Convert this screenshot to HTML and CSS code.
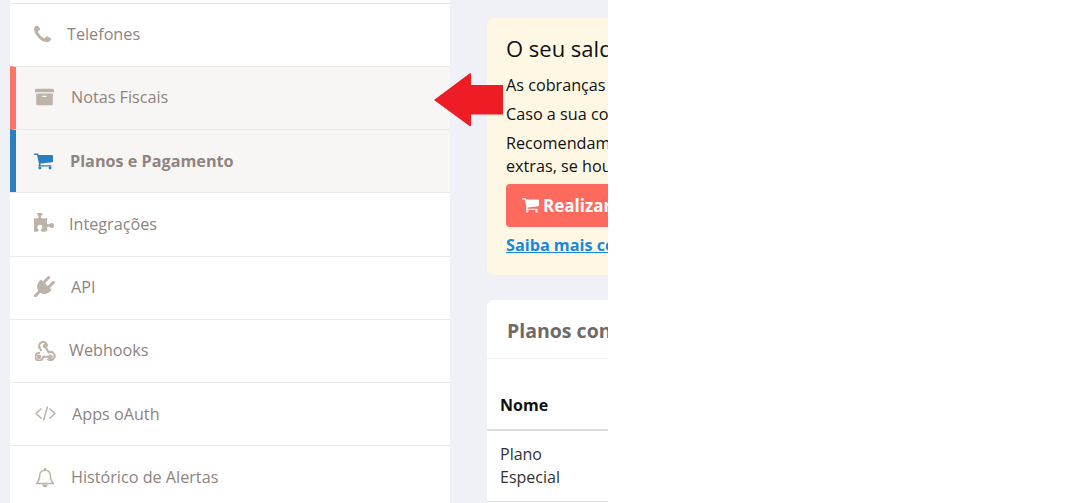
FILE: index.html
```html
<!DOCTYPE html>
<html lang="pt-BR">
<head>
<meta charset="utf-8">
<title>Planos e Pagamento</title>
<link rel="stylesheet" href="styles.css">
</head>
<body>
<div class="page">
  <nav class="sidebar">
    <a class="item">
      <svg class="icon i-phone" viewBox="192 192 1408 1408"><path d="M1600 1240q0 27-10 70.500t-21 68.500q-21 50-122 106-94 51-186 51-27 0-53-3.500t-57.500-12.500-47-14.500-55.500-20.500-49-18q-98-35-175-83-127-79-264-216t-216-264q-48-77-83-175-3-9-18-49t-20.500-55.500-14.500-47-12.500-57.500-3.500-53q0-92 51-186 56-101 106-122 25-11 68.500-21t70.500-10q14 0 21 3 18 6 53 76 11 19 30 54t35 63.500 31 53.500q3 4 17.500 25t21.500 35.500 7 28.500q0 20-28.500 50t-62 55-62 53-28.500 46q0 9 5 22.500t8.500 20.500 14 24 11.500 19q76 137 174 235t235 174q2 1 19 11.500t24 14 20.500 8.500 22.500 5q18 0 46-28.500t53-62 55-62 50-28.500q14 0 28.500 7t35.500 21.500 25 17.500q25 15 53.500 31t63.500 35 54 30q70 35 76 53 3 7 3 21z"/></svg>
      <span class="label up">Telefones</span>
    </a>
    <a class="item active-red">
      <svg class="icon i-archive" viewBox="0 32 512 448"><path d="M32 448c0 17.700 14.300 32 32 32h384c17.700 0 32-14.300 32-32V160H32v288zm160-212c0-6.600 5.400-12 12-12h104c6.600 0 12 5.400 12 12v8c0 6.600-5.400 12-12 12H204c-6.600 0-12-5.400-12-12v-8zM480 32H32C14.300 32 0 46.300 0 64v48c0 8.800 7.200 16 16 16h480c8.800 0 16-7.200 16-16V64c0-17.700-14.300-32-32-32z"/></svg>
      <span class="label up">Notas Fiscais</span>
    </a>
    <a class="item active-blue">
      <svg class="icon i-cart" viewBox="64 256 1664 1408"><path d="M704 1536q0 52-38 90t-90 38-90-38-38-90 38-90 90-38 90 38 38 90zm896 0q0 52-38 90t-90 38-90-38-38-90 38-90 90-38 90 38 38 90zm128-1088v512q0 24-16.500 42.500t-40.500 21.500l-1044 122q13 60 13 70 0 16-24 64h920q26 0 45 19t19 45-19 45-45 19h-1024q-26 0-45-19t-19-45q0-11 8-31.500t16-36 21.500-40 15.500-29.500l-177-823h-204q-26 0-45-19t-19-45 19-45 45-19h256q16 0 28.500 6.500t19.500 15.500 13 24.500 8 26 5.500 29.500 4.500 26h1201q26 0 45 19t19 45z"/></svg>
      <span class="label">Planos e Pagamento</span>
    </a>
    <a class="item">
      <svg class="icon i-puzzle" viewBox="128 128 1536 1536"><path d="M1664 1098q0 81-44.500 135t-123.500 54q-41 0-77.500-17.500t-59-38-56.500-38-71-17.500q-110 0-110 124 0 39 16 115t15 115v5q-22 0-33 1-34 3-97.500 11.500t-115.500 13.500-98 5q-61 0-103-26.500t-42-83.500q0-37 17.500-71t38-56.500 38-59 17.500-77.500q0-79-54-123.500t-135-44.500q-84 0-143 45.500t-59 127.500q0 43 15 83t33.500 64.500 33.500 53 15 50.500q0 45-46 89-37 35-117 35-95 0-245-24-9-2-27.500-4t-27.500-4l-13-2q-1 0-3-1-2 0-2-1v-1024q2 1 17.500 3.500t34 5 21.500 3.500q150 24 245 24 80 0 117-35 46-44 46-89 0-22-15-50.500t-33.500-53-33.500-64.500-15-83q0-82 59-127.500t144-45.500q80 0 134 44.500t54 123.500q0 41-17.500 77.500t-38 59-38 56.500-17.500 71q0 57 42 83.500t103 26.500q64 0 180-15t163-17v2q-1 2-3.500 17.500t-5 34-3.500 21.500q-24 150-24 245 0 80 35 117 44 46 89 46 22 0 50.500-15t53-33.500 64.500-33.500 83-15q82 0 127.500 59t45.500 143z"/></svg>
      <span class="label">Integrações</span>
    </a>
    <a class="item">
      <svg class="icon i-plug" viewBox="0 0 1792 1792"><path d="M1755 453q37 38 37 90.500t-37 90.500l-401 400 150 150-160 160q-163 163-389.500 186.500t-411.500-100.500l-362 362h-181v-181l362-362q-124-185-100.500-411.500t186.500-389.500l160-160 150 150 400-401q38-37 91-37t90 37 37 90.500-37 90.500l-400 401 234 234 401-400q38-37 91-37t90 37z"/></svg>
      <span class="label up">API</span>
    </a>
    <a class="item">
      <svg class="icon i-hook" viewBox="1 0 20 20" fill="none"><g class="hook-lines"><path d="M7.200 10.500 6 8.400a3.800 3.800 0 1 1 6.500-2.300"/><path d="M10.400 5.600 14 11.800a3.800 3.800 0 1 1-1 6"/><path d="M5.800 12.300a3.700 3.700 0 1 0 2.900 3.600h6"/><circle cx="10.400" cy="5.600" r="1.100"/><circle cx="4.800" cy="15.900" r="1.100"/><circle cx="15.700" cy="15.900" r="1.100"/></g></svg>
      <span class="label up">Webhooks</span>
    </a>
    <a class="item">
      <svg class="icon i-code" viewBox="0 0 21 15" fill="none"><path class="code-lines" d="M6.500 2.500 1 7.500l5.500 5M14.500 2.500l5.500 5-5.500 5M12.500.5l-4 14"/></svg>
      <span class="label">Apps oAuth</span>
    </a>
    <a class="item">
      <svg class="icon i-bell" viewBox="0 0 18 20" fill="none"><path class="bell-lines" d="M9 2.200c-3.500 0-5.300 2.400-5.300 5.300 0 4-1 5.800-3 8h16.600c-2-2.200-3-4-3-8 0-2.900-1.800-5.300-5.300-5.300z"/><path class="bell-fill" d="M7.800 .8a1.200 1.200 0 0 1 2.400 0v1.400H7.800zM6.300 16.500h5.400a2.700 2.700 0 0 1-5.400 0z"/></svg>
      <span class="label">Histórico de Alertas</span>
    </a>
  </nav>

  <main class="content">
    <section class="notice">
      <h2 class="notice-title">O seu saldo está negativo</h2>
      <p class="line">As cobranças</p>
      <p class="line">Caso a sua conta</p>
      <p class="line line-tight">Recomendamos</p>
      <p class="line line-tight">extras, se houver</p>
      <a class="pay-btn">
        <svg class="btn-cart" viewBox="64 256 1664 1408"><path d="M704 1536q0 52-38 90t-90 38-90-38-38-90 38-90 90-38 90 38 38 90zm896 0q0 52-38 90t-90 38-90-38-38-90 38-90 90-38 90 38 38 90zm128-1088v512q0 24-16.500 42.500t-40.500 21.500l-1044 122q13 60 13 70 0 16-24 64h920q26 0 45 19t19 45-19 45-45 19h-1024q-26 0-45-19t-19-45q0-11 8-31.500t16-36 21.500-40 15.500-29.500l-177-823h-204q-26 0-45-19t-19-45 19-45 45-19h256q16 0 28.500 6.500t19.500 15.500 13 24.500 8 26 5.500 29.500 4.500 26h1201q26 0 45 19t19 45z"/></svg>
        <span>Realizar pagamento</span>
      </a>
      <a class="more">Saiba mais como</a>
    </section>

    <section class="plans">
      <h3 class="plans-title">Planos contratados</h3>
      <div class="table-head">Nome</div>
      <div class="table-row">Plano<br>Especial</div>
    </section>
  </main>
  <div class="blank"></div>
</div>
<svg class="arrow" viewBox="0 0 70 56"><path d="M0 28 35.500 1.500 Q37 0 37 2.500V13H69V42.500H37V52.500Q37 55 35.500 54z"/></svg>
</body>
</html>
```
FILE: styles.css
```css
* { box-sizing: border-box; }
html, body { margin: 0; height: 503px; overflow: hidden; background: #fff; }
body { font-family: "Open Sans", sans-serif; font-size: 16px; position: relative; }

.page { display: flex; height: 503px; }

.sidebar {
  width: 450px;
  flex: none;
  padding: 3px 0 0;
  margin: 0;
  background: #fff;
  border-left: 10px solid #f0f1f7;
}

.item {
  display: flex;
  align-items: center;
  height: 63.14px;
  padding-left: 24px;
  border-top: 1px solid #ebe9e7;
  color: #8f8480;
  font-size: 16.2px;
}

.label.up { margin-bottom: 2px; }

.active-red, .active-blue { background: #f8f6f4; padding-left: 18px; border-left: 6px solid #ff7469; }
.active-blue { border-left-color: #2a7fbc; font-weight: 700; }

.icon { flex: none; fill: #bdb3a9; }
.i-phone   { width: 17px; height: 17px; margin-right: 16px; margin-top: -2px; }
.i-archive { width: 19px; height: 18px; margin: -3px 17px 0 1px; }
.i-cart    { width: 19px; height: 17px; margin-right: 17px; fill: #2a7fbc; }
.i-puzzle  { width: 20px; height: 20px; margin-right: 15px; margin-top: -2px; }
.i-plug    { width: 21px; height: 21px; margin: -2px 16px 0 0; }
.i-hook    { width: 21px; height: 21px; margin: -1px 13px 0 1px; fill: none; }
.i-code    { width: 21px; height: 15px; margin: -1px 16px 0 1px; fill: none; }
.i-bell    { width: 18px; height: 20px; margin: 2px 17px 0 2px; fill: none; }

.hook-lines, .code-lines, .bell-lines { stroke: #bdb3a9; fill: none; }
.hook-lines { stroke-width: 2; }
.code-lines { stroke-width: 1.500; }
.bell-lines { stroke-width: 1.500; }
.bell-fill { fill: #bdb3a9; }

.content {
  width: 158px;
  flex: none;
  overflow: hidden;
  background: #f0f1f7;
  padding: 18px 0 0 37px;
}

.notice, .plans { width: 500px; border-radius: 6px; }

.notice {
  height: 257px;
  background: #fdf7e3;
  padding: 13px 20px 0 19px;
  color: #111;
  font-size: 16.2px;
}

.notice-title {
  margin: 0 0 6px;
  font-size: 22px;
  font-weight: 400;
  line-height: 34px;
  white-space: nowrap;
}

.line { margin: 0; line-height: 29px; white-space: nowrap; padding-left: 0; }
.line-tight { line-height: 23px; }
.line + .line-tight { margin-top: 3px; }
.line-tight + .line-tight { margin-top: 0; }

.pay-btn {
  display: flex;
  align-items: center;
  width: 260px;
  height: 43px;
  margin-top: 6px;
  padding-left: 16px;
  border-radius: 4px;
  background: #ff6a5e;
  color: #fff;
  font-weight: 700;
  font-size: 17px;
}
.btn-cart { width: 17px; height: 15px; margin-right: 4px; fill: #fff; }

.more {
  display: block;
  margin-top: 6px;
  line-height: 24px;
  color: #1789dc;
  font-weight: 700;
  font-size: 16.2px;
  text-decoration: underline;
  white-space: nowrap;
}

.plans {
  height: 240px;
  margin-top: 25px;
  background: #fff;
}

.plans-title {
  margin: 0;
  height: 59px;
  padding: 0 20px;
  border-bottom: 1px solid #f0f1f7;
  color: #6f6a66;
  font-size: 19.500px;
  font-weight: 700;
  line-height: 61px;
  white-space: nowrap;
}

.table-head {
  height: 72px;
  padding: 0 13px 0;
  border-bottom: 2px solid #ddd;
  color: #111;
  font-weight: 700;
  line-height: 92px;
}

.table-row {
  height: 71px;
  padding: 12px 13px 0;
  border-bottom: 1px solid #ddd;
  color: #333;
  line-height: 23px;
}

.blank { flex: 1; background: #fff; }

.arrow {
  position: absolute;
  left: 434px;
  top: 72px;
  width: 70px;
  height: 56px;
  fill: #ee1c25;
}
```
